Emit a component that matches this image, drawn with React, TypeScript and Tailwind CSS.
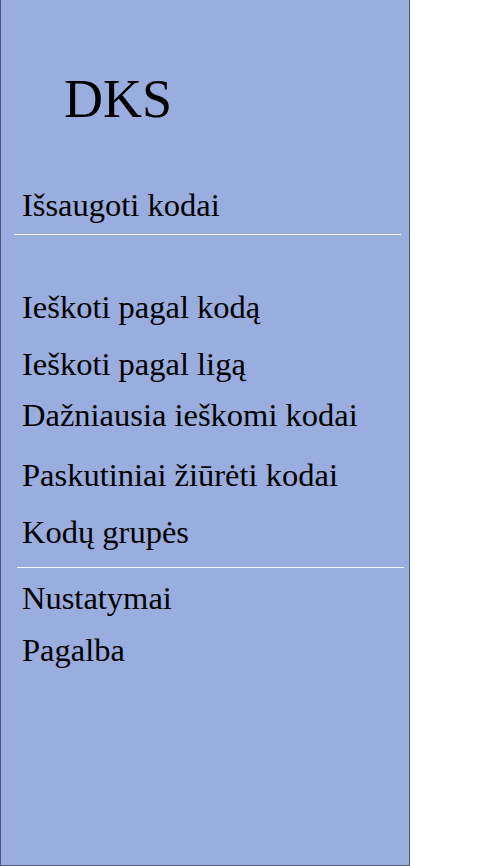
import React from "react";

export default function App() {
  const serif = { fontFamily: '"Liberation Serif", "Times New Roman", serif' };
  return (
    <div className="w-[486px] h-[866px] bg-white" style={serif}>
      <div className="w-[410px] h-[866px] bg-[#99adde] border-l border-r border-b border-[#4b5a7c] text-black overflow-hidden">
        <div className="pt-[72px] pl-[63px] text-[54px] leading-none">DKS</div>
        <div className="mt-[63px] pl-[21px] text-[32.5px] leading-[32px]">Išsaugoti kodai</div>
        <div className="mt-[13px] ml-[13px] w-[387px] h-px bg-[#f4f6fb]" />
        <div className="mt-[56px] pl-[21px] text-[32.5px] leading-[32px]">Ieškoti pagal kodą</div>
        <div className="mt-[25px] pl-[21px] text-[32.5px] leading-[32px]">Ieškoti pagal ligą</div>
        <div className="mt-[19px] pl-[21px] text-[32.5px] leading-[32px]">Dažniausia ieškomi kodai</div>
        <div className="mt-[28px] pl-[21px] text-[32.5px] leading-[32px]">Paskutiniai žiūrėti kodai</div>
        <div className="mt-[25px] pl-[21px] text-[32.5px] leading-[32px]">Kodų grupės</div>
        <div className="mt-[19px] ml-[16px] w-[387px] h-px bg-[#f4f6fb]" />
        <div className="mt-[14px] pl-[21px] text-[32.5px] leading-[32px]">Nustatymai</div>
        <div className="mt-[20px] pl-[21px] text-[32.5px] leading-[32px]">Pagalba</div>
      </div>
    </div>
  );
}
